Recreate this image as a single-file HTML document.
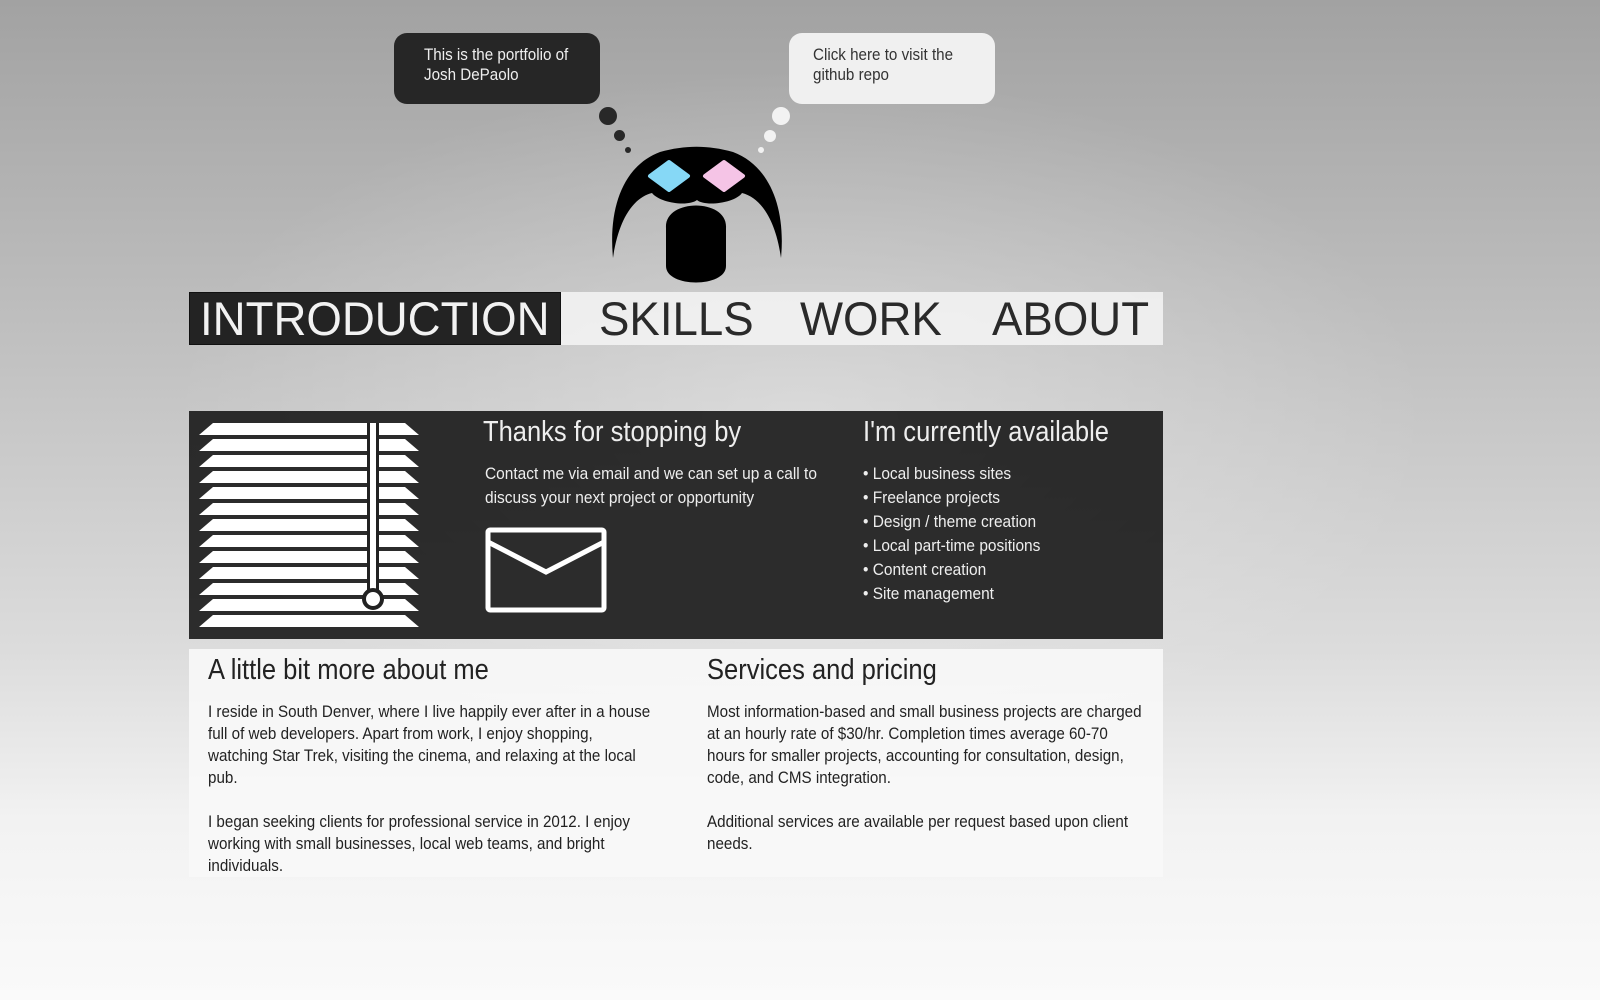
<!DOCTYPE html>
<html><head><meta charset="utf-8"><style>
*{margin:0;padding:0;box-sizing:border-box}
html,body{width:1600px;height:1000px;overflow:hidden}
body{position:relative;font-family:"Liberation Sans",sans-serif;
background:radial-gradient(ellipse 900px 500px at 800px 420px,rgba(255,255,255,0.35),rgba(255,255,255,0) 70%),linear-gradient(180deg,#a2a2a2 0%,#b8b8b8 25%,#cacaca 45%,#dcdcdc 65%,#f2f2f2 82%,#fafafa 100%);}
.bub{position:absolute;border-radius:13px;font-size:16.5px;line-height:20px;padding:12px 0 0 30px}
.bub div{transform:scaleX(0.92);transform-origin:0 0;white-space:nowrap}
.dot{position:absolute;border-radius:50%}
.nav{position:absolute;left:189px;top:292px;width:974px;height:53px;background:rgba(245,245,245,0.85);font-size:47px;line-height:53px;color:#2a2a2a}
.nav span{position:absolute;top:0;transform:scaleX(0.97);transform-origin:0 0;white-space:nowrap}
.introbox{position:absolute;left:0;top:0;width:372px;height:53px;background:#232323;border:1px solid #111}
.dark{position:absolute;left:189px;top:411px;width:974px;height:228px;background:rgba(30,30,30,0.93);color:#eee}
.light{position:absolute;left:189px;top:649px;width:974px;height:228px;background:rgba(248,248,248,0.9);color:#222}
h2{font-weight:normal;font-size:29px;position:absolute;white-space:nowrap;transform:scaleX(0.88);transform-origin:0 0}
p,ul{position:absolute;font-size:17px;line-height:24px;transform-origin:0 0}
.dark p,.dark ul{transform:scaleX(0.91)}
.light p{line-height:22px;font-size:16.5px;transform:scaleX(0.92);width:479px}
ul{list-style:none;white-space:nowrap}
</style></head><body>
<div class="bub" style="left:394px;top:33px;width:206px;height:71px;background:#262626;color:#eee"><div>This is the portfolio of<br>Josh DePaolo</div></div>
<div class="bub" style="left:789px;top:33px;width:206px;height:71px;background:#f0f0f0;color:#333;padding-left:24px"><div>Click here to visit the<br>github repo</div></div>
<div class="dot" style="left:599px;top:107px;width:18px;height:18px;background:#282828"></div>
<div class="dot" style="left:614px;top:130px;width:11px;height:11px;background:#282828"></div>
<div class="dot" style="left:625px;top:147px;width:6px;height:6px;background:#282828"></div>
<div class="dot" style="left:772px;top:107px;width:18px;height:18px;background:#f2f2f2"></div>
<div class="dot" style="left:764px;top:130px;width:12px;height:12px;background:#f2f2f2"></div>
<div class="dot" style="left:758px;top:147px;width:6px;height:6px;background:#f2f2f2"></div>
<svg style="position:absolute;left:0;top:0" width="1600" height="300">
<path d="M613,258 C608,205 625,165 660,152 C685,145 708,145 733,152 C768,165 786,205 781,258 C776,222 762,198 742,193 C735,203 705,207 697,200 C688,207 660,203 652,193 C632,198 618,222 613,258 Z" fill="#000"/>
<path d="M666,228 C664,198 728,198 726,228 L726,266 C726,288 666,288 666,266 Z" fill="#000"/>
<path d="M669,162 L688,176 L669,190 L650,176 Z" fill="#86d8f6" stroke="#86d8f6" stroke-width="4" stroke-linejoin="round"/>
<path d="M724,162 L743,176 L724,190 L705,176 Z" fill="#f5c4e6" stroke="#f5c4e6" stroke-width="4" stroke-linejoin="round"/>
</svg>
<div class="nav">
<div class="introbox"></div>
<span style="left:11px;color:#f2f2f2">INTRODUCTION</span>
<span style="left:410px">SKILLS</span>
<span style="left:611px">WORK</span>
<span style="left:803px">ABOUT</span>
</div>
<div class="dark">
<svg style="position:absolute;left:10px;top:12px" width="220" height="206">
<g fill="#fff">
<path d="M14,0 H206 L220,12 H0 Z"/><path d="M14,16 H206 L220,28 H0 Z"/><path d="M14,32 H206 L220,44 H0 Z"/>
<path d="M14,48 H206 L220,60 H0 Z"/><path d="M14,64 H206 L220,76 H0 Z"/><path d="M14,80 H206 L220,92 H0 Z"/>
<path d="M14,96 H206 L220,108 H0 Z"/><path d="M14,112 H206 L220,124 H0 Z"/><path d="M14,128 H206 L220,140 H0 Z"/>
<path d="M14,144 H206 L220,156 H0 Z"/><path d="M14,160 H206 L220,172 H0 Z"/><path d="M14,176 H206 L220,188 H0 Z"/>
<path d="M14,192 H206 L220,204 H0 Z"/>
</g>
<rect x="168" y="0" width="12" height="170" fill="#222"/>
<rect x="171" y="0" width="6" height="168" fill="#fff"/>
<circle cx="174" cy="176" r="9" fill="#fff" stroke="#222" stroke-width="4"/>
</svg>
<h2 style="left:294px;top:5px">Thanks for stopping by</h2>
<p style="left:296px;top:51px;white-space:nowrap">Contact me via email and we can set up a call to<br>discuss your next project or opportunity</p>
<svg style="position:absolute;left:296px;top:116px" width="122" height="86"><rect x="3" y="3" width="116" height="80" rx="2" fill="none" stroke="#fff" stroke-width="5"/><path d="M3,15 L61,45 L119,15" fill="none" stroke="#fff" stroke-width="5"/></svg>
<h2 style="left:674px;top:5px">I'm currently available</h2>
<ul style="left:674px;top:51px"><li>• Local business sites</li><li>• Freelance projects</li><li>• Design / theme creation</li><li>• Local part-time positions</li><li>• Content creation</li><li>• Site management</li></ul>
</div>
<div class="light">
<h2 style="left:19px;top:5px">A little bit more about me</h2>
<p style="left:19px;top:52px;white-space:nowrap;width:auto">I reside in South Denver, where I live happily ever after in a house<br>full of web developers. Apart from work, I enjoy shopping,<br>watching Star Trek, visiting the cinema, and relaxing at the local<br>pub.<br><br>I began seeking clients for professional service in 2012. I enjoy<br>working with small businesses, local web teams, and bright<br>individuals.</p>
<h2 style="left:518px;top:5px">Services and pricing</h2>
<p style="left:518px;top:52px">Most information-based and small business projects are charged at an hourly rate of $30/hr. Completion times average 60-70 hours for smaller projects, accounting for consultation, design, code, and CMS integration.<br><br>Additional services are available per request based upon client needs.</p>
</div>
</body></html>
